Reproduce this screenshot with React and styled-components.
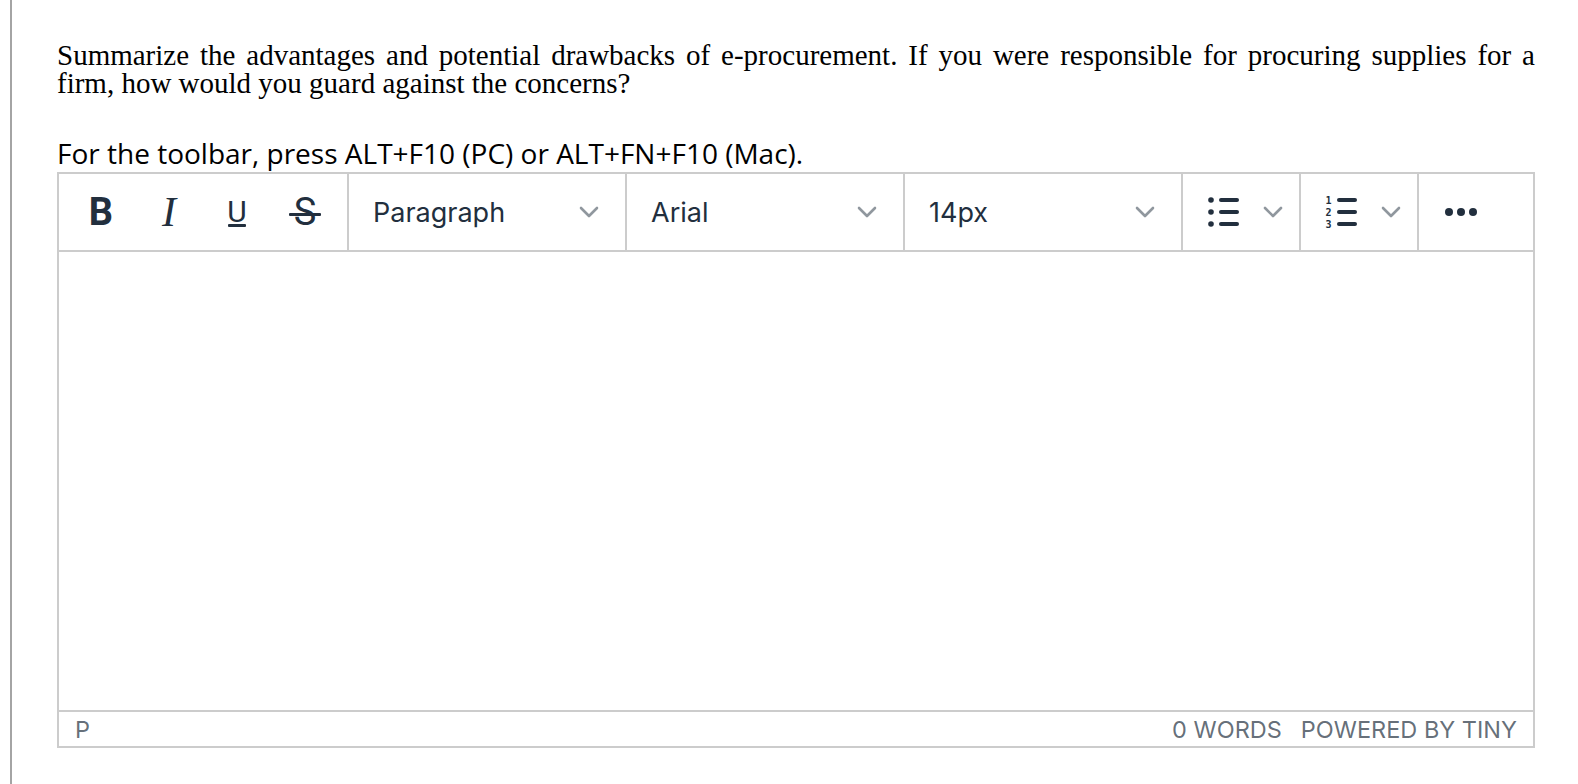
import React from 'react';
import styled, { createGlobalStyle } from 'styled-components';

const GlobalStyle = createGlobalStyle`
  html, body {
    margin: 0;
    padding: 0;
    background: #fff;
  }
  body {
    height: 784px;
    overflow: hidden;
  }
`;

const Page = styled.div`
  margin-left: 10px;
  border-left: 2px solid #a4a4a4;
  min-height: 784px;
  box-sizing: border-box;
  padding: 41px 43px 0 45px;
`;

const Question = styled.p`
  margin: 0;
  font-family: "Liberation Serif", "Times New Roman", serif;
  font-size: 29px;
  line-height: 28px;
  text-align: justify;
  color: #000;
`;

const Hint = styled.p`
  margin: 40px 0 3px;
  font-family: "Open Sans", sans-serif;
  font-size: 28px;
  line-height: 32px;
  color: #000;
`;

const Editor = styled.div`
  border: 2px solid #ccc;
  height: 576px;
  box-sizing: border-box;
  display: flex;
  flex-direction: column;
`;

const Toolbar = styled.div`
  display: flex;
  height: 76px;
  flex-shrink: 0;
  border-bottom: 2px solid #ccc;
`;

const Group = styled.div`
  display: flex;
  align-items: center;
  padding: 0 8px;
  border-right: ${p => (p.$last ? 'none' : '2px solid #ccc')};
`;

const IconButton = styled.button`
  width: ${p => p.$w || 68}px;
  height: 68px;
  border: 0;
  padding: 0;
  background: none;
  display: flex;
  align-items: center;
  justify-content: center;
  color: #222f3e;
  cursor: pointer;
`;

const Glyph = styled.span`
  position: relative;
  font-family: ${p => (p.$serif ? '"Liberation Serif", serif' : 'Roboto, sans-serif')};
  font-size: ${p => p.$size}px;
  font-weight: ${p => p.$weight || 400};
  font-style: ${p => (p.$italic ? 'italic' : 'normal')};
  line-height: 1;
  color: #222f3e;
`;

const Underlined = styled(Glyph)`
  &::after {
    content: '';
    position: absolute;
    left: 1px;
    right: 1px;
    bottom: 0px;
    height: 3px;
    border-radius: 1px;
    background: #222f3e;
  }
`;

const Struck = styled(Glyph)`
  &::after {
    content: '';
    position: absolute;
    left: -5px;
    right: -5px;
    top: 52%;
    height: 3px;
    border-radius: 1px;
    background: #222f3e;
  }
`;

const Select = styled.button`
  width: 260px;
  height: 68px;
  border: 0;
  background: none;
  display: flex;
  align-items: center;
  padding: 0 18px 0 16px;
  font-family: Inter, "Liberation Sans", sans-serif;
  font-size: 27px;
  color: #222f3e;
  cursor: pointer;
`;

const Label = styled.span`
  flex: 1;
  text-align: left;
`;

const Content = styled.div`
  flex: 1;
`;

const Statusbar = styled.div`
  height: 34px;
  flex-shrink: 0;
  border-top: 2px solid #ccc;
  display: flex;
  align-items: center;
  justify-content: space-between;
  padding: 0 16px;
  font-family: Inter, "Liberation Sans", sans-serif;
  font-size: 23.5px;
  color: rgba(34, 47, 62, 0.7);
`;

const StatusRight = styled.div`
  display: flex;
  gap: 19px;
`;

const Chevron = () => (
  <svg width="20" height="20" viewBox="0 0 10 10">
    <polyline
      points="1,3 5,7 9,3"
      fill="none"
      stroke="#90979e"
      strokeWidth="1.3"
      strokeLinecap="round"
      strokeLinejoin="round"
    />
  </svg>
);

const BulletList = () => (
  <svg width="48" height="48" viewBox="0 0 24 24" fill="#222f3e">
    <circle cx="6" cy="6" r="1.4" />
    <circle cx="6" cy="12" r="1.4" />
    <circle cx="6" cy="18" r="1.4" />
    <rect x="10" y="5" width="10" height="2" rx="1" />
    <rect x="10" y="11" width="10" height="2" rx="1" />
    <rect x="10" y="17" width="10" height="2" rx="1" />
  </svg>
);

const NumList = () => (
  <svg width="48" height="48" viewBox="0 0 24 24" fill="#222f3e">
    <text x="4.2" y="7.9" fontSize="5" fontWeight="700" fontFamily="DejaVu Sans Mono, monospace">1</text>
    <text x="4.2" y="13.9" fontSize="5" fontWeight="700" fontFamily="DejaVu Sans Mono, monospace">2</text>
    <text x="4.2" y="19.9" fontSize="5" fontWeight="700" fontFamily="DejaVu Sans Mono, monospace">3</text>
    <rect x="10" y="5" width="10" height="2" rx="1" />
    <rect x="10" y="11" width="10" height="2" rx="1" />
    <rect x="10" y="17" width="10" height="2" rx="1" />
  </svg>
);

const MoreDots = () => (
  <svg width="48" height="48" viewBox="0 0 24 24" fill="#222f3e">
    <circle cx="6" cy="12" r="2" />
    <circle cx="12" cy="12" r="2" />
    <circle cx="18" cy="12" r="2" />
  </svg>
);

const selects = ['Paragraph', 'Arial', '14px'];

const App = () => {
  return (
    <>
      <GlobalStyle />
      <Page>
        <Question>
          Summarize the advantages and potential drawbacks of e-procurement. If you were
          responsible for procuring supplies for a firm, how would you guard against the
          concerns?
        </Question>
        <Hint>For the toolbar, press ALT+F10 (PC) or ALT+FN+F10 (Mac).</Hint>
        <Editor>
          <Toolbar>
            <Group>
              <IconButton title="Bold">
                <Glyph $size={38} $weight={700}>B</Glyph>
              </IconButton>
              <IconButton title="Italic">
                <Glyph $size={42} $serif $italic>I</Glyph>
              </IconButton>
              <IconButton title="Underline">
                <Underlined $size={30}>U</Underlined>
              </IconButton>
              <IconButton title="Strikethrough">
                <Struck $size={38}>S</Struck>
              </IconButton>
            </Group>
            {selects.map(s => (
              <Group key={s}>
                <Select>
                  <Label>{s}</Label>
                  <Chevron />
                </Select>
              </Group>
            ))}
            <Group>
              <IconButton $w={64} title="Bullet list">
                <BulletList />
              </IconButton>
              <IconButton $w={36}>
                <Chevron />
              </IconButton>
            </Group>
            <Group>
              <IconButton $w={64} title="Numbered list">
                <NumList />
              </IconButton>
              <IconButton $w={36}>
                <Chevron />
              </IconButton>
            </Group>
            <Group $last>
              <IconButton title="More">
                <MoreDots />
              </IconButton>
            </Group>
          </Toolbar>
          <Content />
          <Statusbar>
            <span>P</span>
            <StatusRight>
              <span>0 WORDS</span>
              <span>POWERED BY TINY</span>
            </StatusRight>
          </Statusbar>
        </Editor>
      </Page>
    </>
  );
};

export default App;
